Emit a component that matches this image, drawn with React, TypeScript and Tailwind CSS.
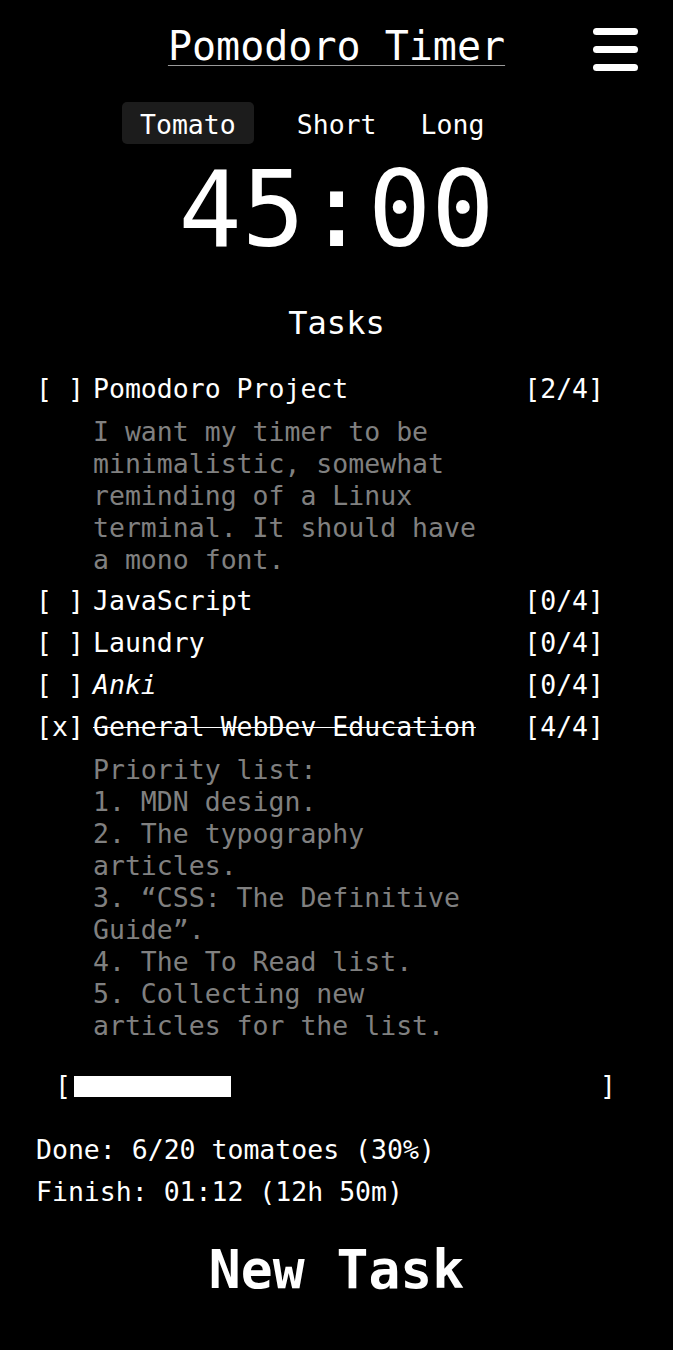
import React from 'react';

const mono = "font-['DejaVu_Sans_Mono','Liberation_Mono',monospace]";

type Task = {
  title: string;
  count: string;
  done?: boolean;
  italic?: boolean;
  notes?: string[];
};

const tasks: Task[] = [
  {
    title: 'Pomodoro Project',
    count: '[2/4]',
    notes: [
      'I want my timer to be minimalistic, somewhat reminding of a Linux terminal. It should have a mono font.',
    ],
  },
  { title: 'JavaScript', count: '[0/4]' },
  { title: 'Laundry', count: '[0/4]' },
  { title: 'Anki', count: '[0/4]', italic: true },
  {
    title: 'General WebDev Education',
    count: '[4/4]',
    done: true,
    notes: [
      'Priority list:',
      '1. MDN design.',
      '2. The typography articles.',
      '3. \u201CCSS: The Definitive Guide\u201D.',
      '4. The To Read list.',
      '5. Collecting new articles for the list.',
    ],
  },
];

const TaskRow = ({ task }: { task: Task }) => (
  <li>
    <div className="flex h-[42px] items-center leading-[42px]">
      <span className="w-[48px] shrink-0 whitespace-pre">{task.done ? '[x]' : '[ ]'}</span>
      <span
        className={`ml-[9px] flex-1 whitespace-nowrap ${task.italic ? 'italic' : ''} ${
          task.done ? 'line-through decoration-1' : ''
        }`}
      >
        {task.title}
      </span>
      <span className="shrink-0">{task.count}</span>
    </div>
    {task.notes && (
      <div className="ml-[57px] mt-[6px] mb-[4px] w-[24.5ch] leading-[32px] text-[#808080]">
        {task.notes.map((n, i) => (
          <p key={i}>{n}</p>
        ))}
      </div>
    )}
  </li>
);

export default function App() {
  const progress = 30;

  return (
    <div className={`min-h-[1350px] bg-black text-white ${mono}`}>
      <header className="relative pt-[22px]">
        <h1 className="text-center text-[40px] leading-[48px] underline decoration-[#9a9a9a] decoration-1 underline-offset-[5px]">
          Pomodoro Timer
        </h1>
        <button className="absolute right-[35px] top-[28px] flex w-[45px] flex-col gap-[11px]">
          <span className="h-[7px] rounded-full bg-white" />
          <span className="h-[7px] rounded-full bg-white" />
          <span className="h-[7px] rounded-full bg-white" />
        </button>
      </header>

      <nav className="mt-[32px] flex h-[42px] pl-[122px] text-[26.5px] leading-[38px]">
        <button className="rounded-[5px] bg-[#1c1c1c] px-[18px] pt-[4px]">Tomato</button>
        <button className="ml-[25px] px-[18px] pt-[4px]">Short</button>
        <button className="ml-[8px] px-[18px] pt-[4px]">Long</button>
      </nav>

      <div className="mt-[12px] text-center text-[105px] leading-[108px]">45:00</div>

      <h2 className="mt-[39px] text-center text-[32px] leading-[40px]">Tasks</h2>

      <ul className="mt-[25px] pl-[36px] pr-[69px] text-[26.5px]">
        {tasks.map((t) => (
          <TaskRow key={t.title} task={t} />
        ))}
      </ul>

      <div className="mt-[23px] flex h-[42px] items-center pl-[55px] pr-[57px] text-[26.5px]">
        <span>[</span>
        <div className="mx-[3px] h-[21px] flex-1">
          <div className="h-full bg-white" style={{ width: `${progress}%` }} />
        </div>
        <span>]</span>
      </div>

      <div className="mt-[22px] pl-[36px] text-[26.5px] leading-[42px]">
        <p>Done: 6/20 tomatoes (30%)</p>
        <p>Finish: 01:12 (12h 50m)</p>
      </div>

      <button className="mt-[25px] block w-full text-center text-[53px] font-bold leading-[64px]">
        New Task
      </button>
    </div>
  );
}
